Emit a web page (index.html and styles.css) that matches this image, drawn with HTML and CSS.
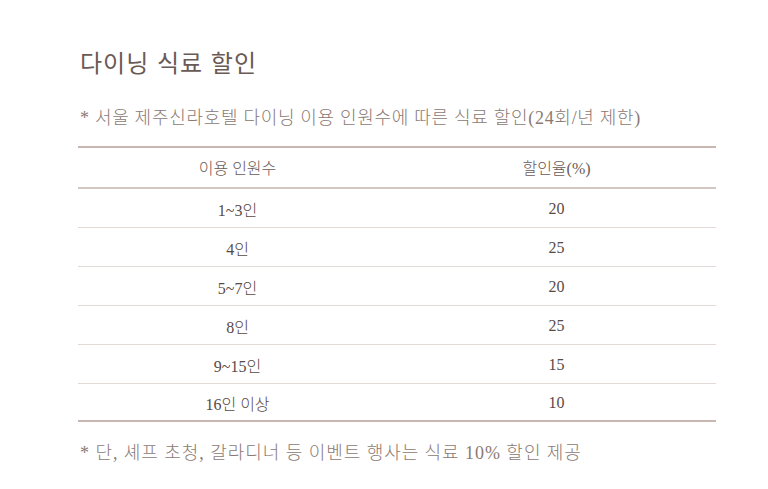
FILE: index.html
```html
<!DOCTYPE html>
<html lang="ko">
<head>
<meta charset="utf-8">
<link rel="stylesheet" href="styles.css">
</head>
<body>
<main class="page">
  <h2 class="title">다이닝 식료 할인</h2>
  <p class="note">* 서울 제주신라호텔 다이닝 이용 인원수에 따른 식료 할인(24회/년 제한)</p>
  <table class="rates">
    <thead>
      <tr><th>이용 인원수</th><th>할인율(%)</th></tr>
    </thead>
    <tbody>
      <tr><td>1~3인</td><td>20</td></tr>
      <tr><td>4인</td><td>25</td></tr>
      <tr><td>5~7인</td><td>20</td></tr>
      <tr><td>8인</td><td>25</td></tr>
      <tr><td>9~15인</td><td>15</td></tr>
      <tr><td>16인 이상</td><td>10</td></tr>
    </tbody>
  </table>
  <p class="note foot">* 단, 셰프 초청, 갈라디너 등 이벤트 행사는 식료 10% 할인 제공</p>
</main>
</body>
</html>
```
FILE: styles.css
```css
html, body {
  margin: 0;
  padding: 0;
  background: #ffffff;
}
.page {
  width: 638px;
  padding: 45px 0 0 78px;
  font-family: "Liberation Serif", "Noto Sans CJK KR", serif;
}
.title {
  margin: 0 0 0 2px;
  font-family: "Noto Sans CJK KR", sans-serif;
  font-weight: 400;
  font-size: 24px;
  line-height: 34px;
  color: #6a5a55;
  letter-spacing: 1px;
}
.note {
  margin: 27px 0 0 2px;
  font-size: 18px;
  line-height: 24px;
  color: #8a7a73;
  font-weight: 300;
  letter-spacing: 0.7px;
}
.rates {
  width: 638px;
  margin-top: 16px;
  border-collapse: collapse;
  table-layout: fixed;
  border-top: 2px solid #c7b6b1;
  border-bottom: 2px solid #c7b6b1;
}
.rates th, .rates td {
  width: 50%;
  height: 38px;
  padding: 0;
  text-align: center;
  font-size: 16px;
  font-weight: 300;
  color: #5a4a45;
}
.rates thead th {
  height: 37px;
  padding-bottom: 2px;
  border-bottom: 2px solid #d4c6c2;
  color: #6a5a55;
}
.rates tbody td {
  height: 37px;
  padding-top: 1px;
  border-bottom: 1px solid #e3dad7;
}
.rates tbody tr:last-child td {
  height: 35px;
}
.foot {
  margin-top: 19px;
  letter-spacing: 0.95px;
}
```
